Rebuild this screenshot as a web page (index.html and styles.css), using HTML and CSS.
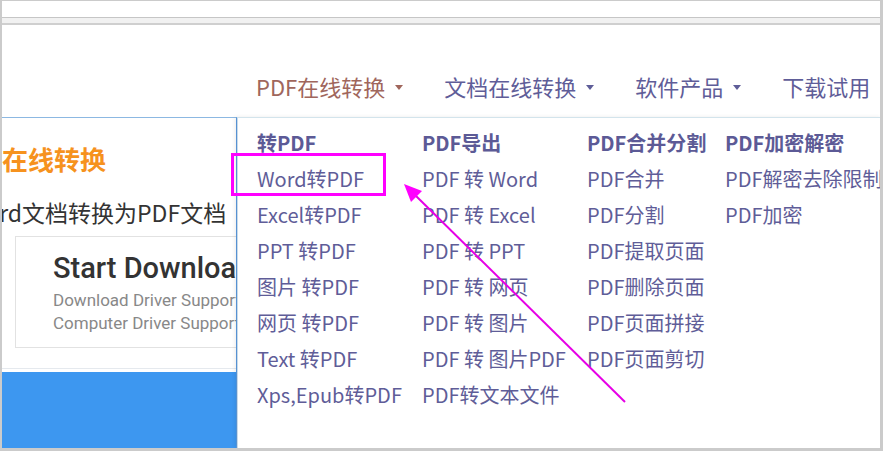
FILE: index.html
```html
<!DOCTYPE html>
<html>
<head>
<meta charset="utf-8">
<meta name="viewport" content="width=device-width, initial-scale=1">
<title>PDF在线转换</title>
<link rel="stylesheet" href="styles.css">
</head>
<body>
<div class="window">
<div class="toolbar"></div>
<header class="navbar">
<nav class="menu">
<a class="active" href="#">PDF在线转换<span class="caret"></span></a>
<a href="#">文档在线转换<span class="caret"></span></a>
<a href="#">软件产品<span class="caret"></span></a>
<a href="#">下载试用</a>
</nav>
</header>
<div class="main">
<section class="card">
<h2 class="card-title">在线转换</h2>
<p class="card-desc">Word文档转换为PDF文档</p>
<div class="download">
<h3>Start Download</h3>
<p>Download Driver Support</p>
<p>Computer Driver Support</p>
</div>
<div class="card-foot"><div class="banner"></div></div>
</section>
<div class="dropdown">
<ul class="col c1">
<li class="head">转PDF</li>
<li><a href="#">Word转PDF</a></li>
<li><a href="#">Excel转PDF</a></li>
<li><a href="#">PPT 转PDF</a></li>
<li><a href="#">图片 转PDF</a></li>
<li><a href="#">网页 转PDF</a></li>
<li><a href="#">Text 转PDF</a></li>
<li><a href="#">Xps,Epub转PDF</a></li>
</ul>
<ul class="col c2">
<li class="head">PDF导出</li>
<li><a href="#">PDF 转 Word</a></li>
<li><a href="#">PDF 转 Excel</a></li>
<li><a href="#">PDF 转 PPT</a></li>
<li><a href="#">PDF 转 网页</a></li>
<li><a href="#">PDF 转 图片</a></li>
<li><a href="#">PDF 转 图片PDF</a></li>
<li><a href="#">PDF转文本文件</a></li>
</ul>
<ul class="col c3">
<li class="head">PDF合并分割</li>
<li><a href="#">PDF合并</a></li>
<li><a href="#">PDF分割</a></li>
<li><a href="#">PDF提取页面</a></li>
<li><a href="#">PDF删除页面</a></li>
<li><a href="#">PDF页面拼接</a></li>
<li><a href="#">PDF页面剪切</a></li>
</ul>
<ul class="col c4">
<li class="head">PDF加密解密</li>
<li><a href="#">PDF解密去除限制</a></li>
<li><a href="#">PDF加密</a></li>
</ul>
</div>
</div>
</div>
<svg class="marks" width="883" height="451" viewBox="0 0 883 451">
<rect x="232.5" y="154.5" width="152" height="40" fill="none" stroke="#f0f" stroke-width="3"/>
<line x1="625" y1="402" x2="414" y2="194" stroke="#e600e6" stroke-width="2"/>
<polygon points="404,184 422,191 411,202" fill="#f0f"/>
</svg>
</body>
</html>
```

FILE: styles.css
```css
html,body{margin:0;padding:0;background:#fff;}
body{position:relative;width:883px;height:451px;overflow:hidden;font-family:"Noto Sans CJK SC","Noto Sans",sans-serif;}
a{text-decoration:none;color:inherit;}
.window{box-sizing:border-box;width:883px;height:451px;border:solid #cbcbcb;border-width:1px 3px 3px 2px;overflow:hidden;display:flex;flex-direction:column;}
.toolbar{height:5px;margin-top:16px;border-top:1px solid #c6c6c6;border-bottom:2px solid #cfcfcf;background:#f1f1f1;flex:none;}
.navbar{height:92px;flex:none;box-sizing:border-box;padding-top:46px;}
.menu{display:flex;padding-left:254px;}
.menu a{display:flex;align-items:center;height:30px;font-size:22px;color:#5f5d98;margin-right:41px;white-space:nowrap;}
.menu a.active{color:#a0665c;}
.caret{display:inline-block;margin-left:10px;border-top:5px solid currentColor;border-left:4px solid transparent;border-right:4px solid transparent;margin-top:2px;}
.main{flex:1;display:flex;min-height:0;}
.card{width:234px;flex:none;border-top:1px solid #8cb8e2;border-right:1px solid #5c9be0;overflow:hidden;display:flex;flex-direction:column;}
.card-title{margin:25px 0 0;font-size:26px;line-height:32px;font-weight:bold;color:#f6921e;white-space:nowrap;}
.card-desc{margin:22px 0 0;font-size:23px;line-height:30px;color:#333;white-space:nowrap;text-indent:-37px;}
.download{margin:9px 0 0 13px;width:320px;height:112px;box-sizing:border-box;border:1px solid #e2e2e2;padding:13px 0 0 37px;font-family:Roboto,"Noto Sans",sans-serif;white-space:nowrap;}
.download h3{margin:0;font-size:29px;line-height:36px;font-weight:500;color:#333;}
.download p{margin:0;font-size:17px;line-height:23px;color:#888;}
.download h3+p{margin-top:3px;}
.card-foot{margin-top:20px;border-top:1px solid #e5e9ee;padding-top:3px;flex:1;display:flex;}
.banner{flex:1;background:#3d97f0;}
.dropdown{flex:1;display:flex;border-top:1px solid #d3e4ec;border-left:1px solid #c9dbe9;padding:7px 0 0 19px;box-shadow:-2px 0 4px rgba(0,0,0,.08);white-space:nowrap;}
.col{list-style:none;margin:0;padding:0;font-size:20px;line-height:36px;color:#5f5d98;}
.col .head{font-weight:bold;color:#5c5a96;}
.c1,.c2{width:165px;}
.c3{width:138px;}
.marks{position:absolute;left:0;top:0;}
```
